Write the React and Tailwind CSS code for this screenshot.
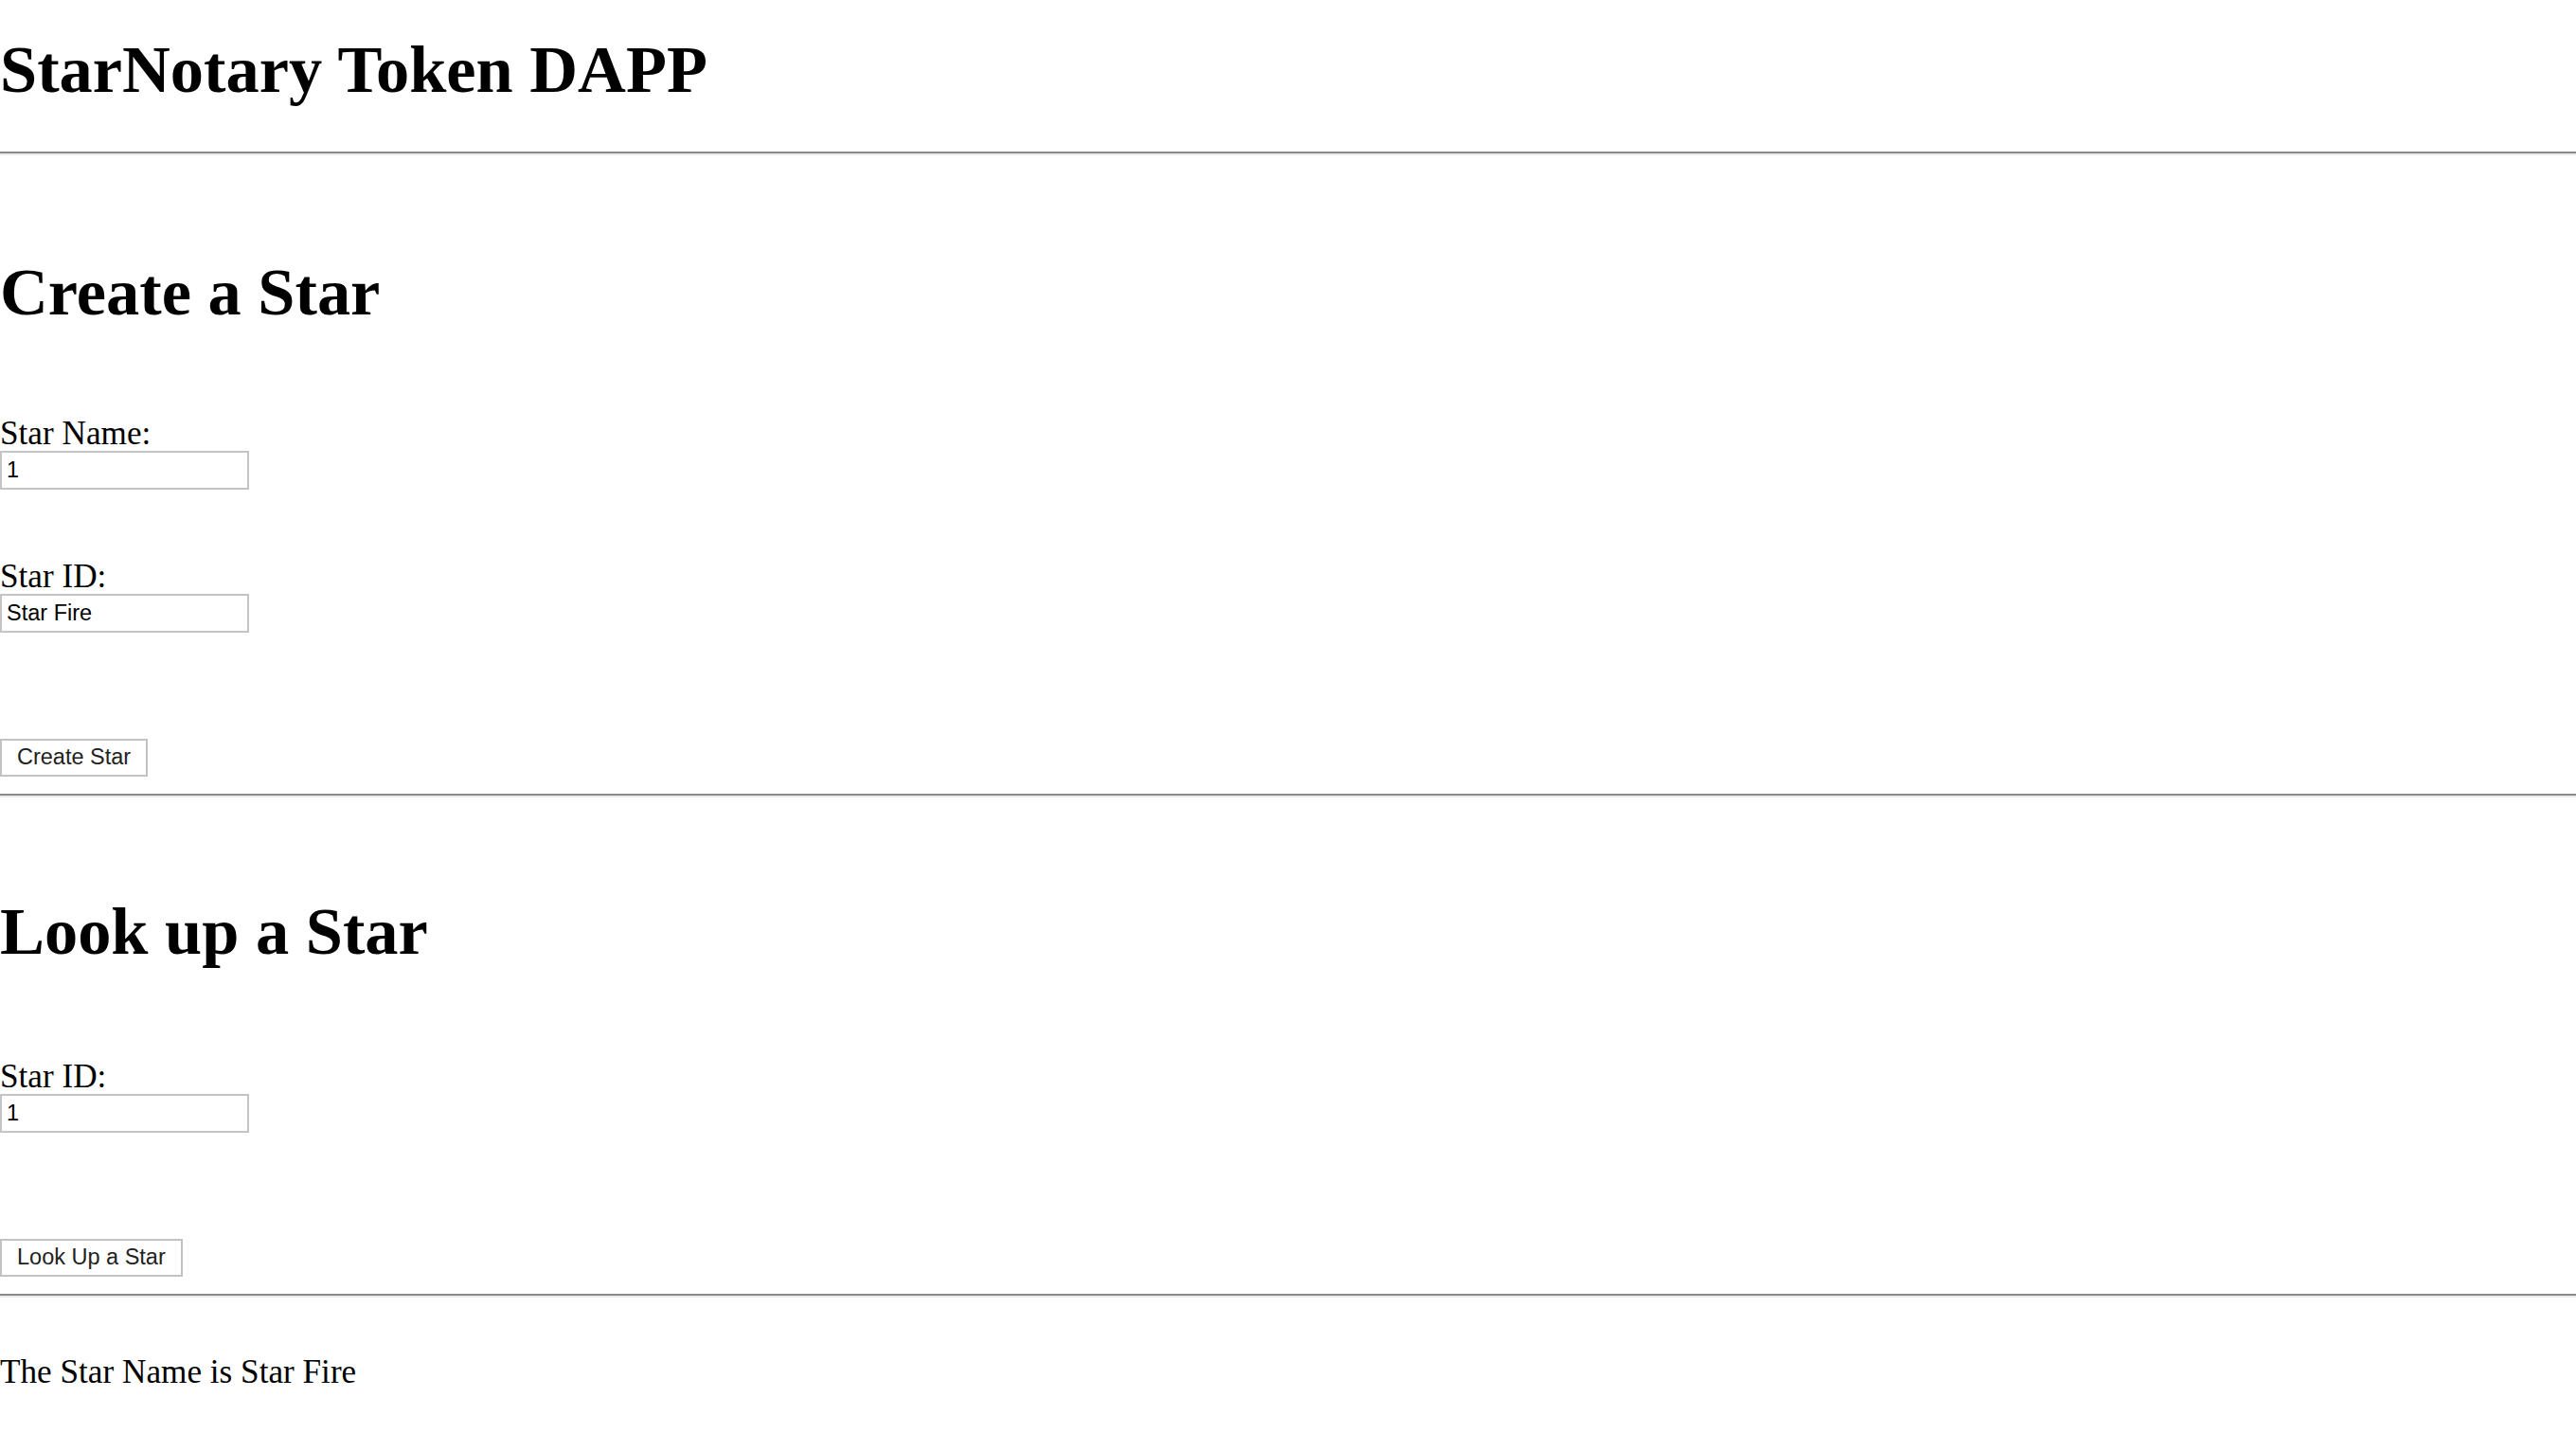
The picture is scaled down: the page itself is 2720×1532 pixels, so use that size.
import { useState } from "react"

const serif = "font-['Liberation_Serif','Times_New_Roman',serif]"
const sans = "font-['Liberation_Sans',Arial,sans-serif]"

function Rule({ className = "" }) {
  return <div className={`h-[4px] w-full border-t-2 border-b-2 border-t-[#8a8a8a] border-b-[#ebebeb] ${className}`} />
}

function Heading({ children, className = "" }) {
  return <h1 className={`text-[70.4px] font-bold leading-[80px] text-black ${className}`}>{children}</h1>
}

function Field({ label, value, onChange, className = "" }) {
  return (
    <div className={`flex flex-col items-start ${className}`}>
      <label className="text-[35.2px] leading-[40px] text-black">{label}</label>
      <input
        type="text"
        value={value}
        onChange={(e) => onChange(e.target.value)}
        className={`${sans} -mt-[2px] h-[41px] w-[263px] border-2 border-[#c4c4c4] bg-white px-[5px] text-[23.5px] text-black outline-none`}
      />
    </div>
  )
}

function Btn({ children, className = "" }) {
  return (
    <button
      type="button"
      className={`${sans} h-[40px] border-2 border-[#c2c2c2] bg-white px-[16px] text-[23.5px] leading-none text-[#222] ${className}`}
    >
      {children}
    </button>
  )
}

export default function App() {
  const [starName, setStarName] = useState("1")
  const [starId, setStarId] = useState("Star Fire")
  const [lookupId, setLookupId] = useState("1")

  return (
    <div className={`${serif} flex min-h-screen w-full flex-col items-start bg-white text-black`}>
      <Heading className="mt-[33px]">StarNotary Token DAPP</Heading>
      <Rule className="mt-[47px]" />

      <Heading className="mt-[104px]">Create a Star</Heading>
      <Field label="Star Name:" value={starName} onChange={setStarName} className="mt-[90px]" />
      <Field label="Star ID:" value={starId} onChange={setStarId} className="mt-[72px]" />
      <Btn className="mt-[112px]">Create Star</Btn>
      <Rule className="mt-[18px]" />

      <Heading className="mt-[101px]">Look up a Star</Heading>
      <Field label="Star ID:" value={lookupId} onChange={setLookupId} className="mt-[94px]" />
      <Btn className="mt-[112px]">Look Up a Star</Btn>
      <Rule className="mt-[18px]" />

      <p className="mt-[59px] text-[35.2px] leading-[40px]">The Star Name is Star Fire</p>
    </div>
  )
}
